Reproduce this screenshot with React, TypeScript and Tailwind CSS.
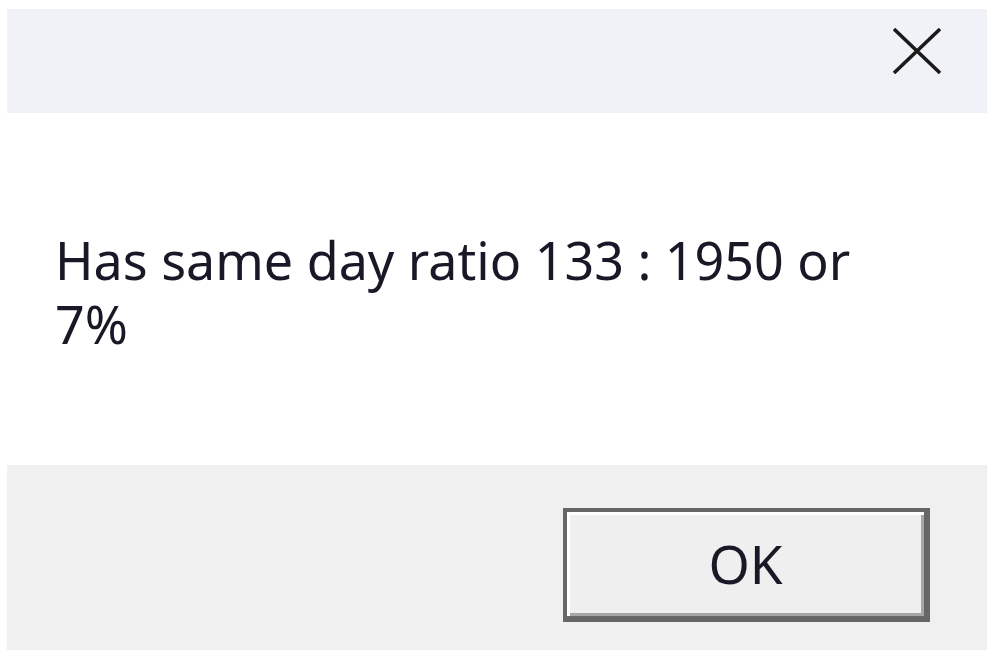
export default function App() {
  return (
    <div className="h-[656px] w-[995px] bg-white pl-[7px] pt-[9px]">
      <div className="flex w-[980px] flex-col" style={{ fontFamily: '"Noto Sans", "Open Sans", sans-serif' }}>
        <div className="flex h-[104px] items-start justify-end bg-[#f0f2f8] pr-[46px] pt-[19px]">
          <svg width="48" height="46" viewBox="0 0 48 46" className="text-[#1a1a1a]">
            <path d="M1 1 L47 45 M47 1 L1 45" stroke="currentColor" strokeWidth="3.5" fill="none" />
          </svg>
        </div>

        <div className="h-[352px] bg-white px-[48px] pt-[115px]">
          <p className="text-[52px] leading-[64px] text-[#1b1727]">
            Has same day ratio 133 : 1950 or
            <br />
            7%
          </p>
        </div>

        <div className="flex h-[185px] items-start justify-end bg-[#f0f0f0] pr-[57px] pt-[43px]">
          <button
            type="button"
            className="flex h-[114px] w-[367px] items-center justify-center border-[4px] border-r-[6px] border-b-[6px] border-[#666666] bg-[#efefef] text-[53px] text-[#1b1727] shadow-[inset_3px_3px_0_#ffffff,inset_-3px_-3px_0_#a6a6a6]"
          >
            OK
          </button>
        </div>
      </div>
    </div>
  );
}
